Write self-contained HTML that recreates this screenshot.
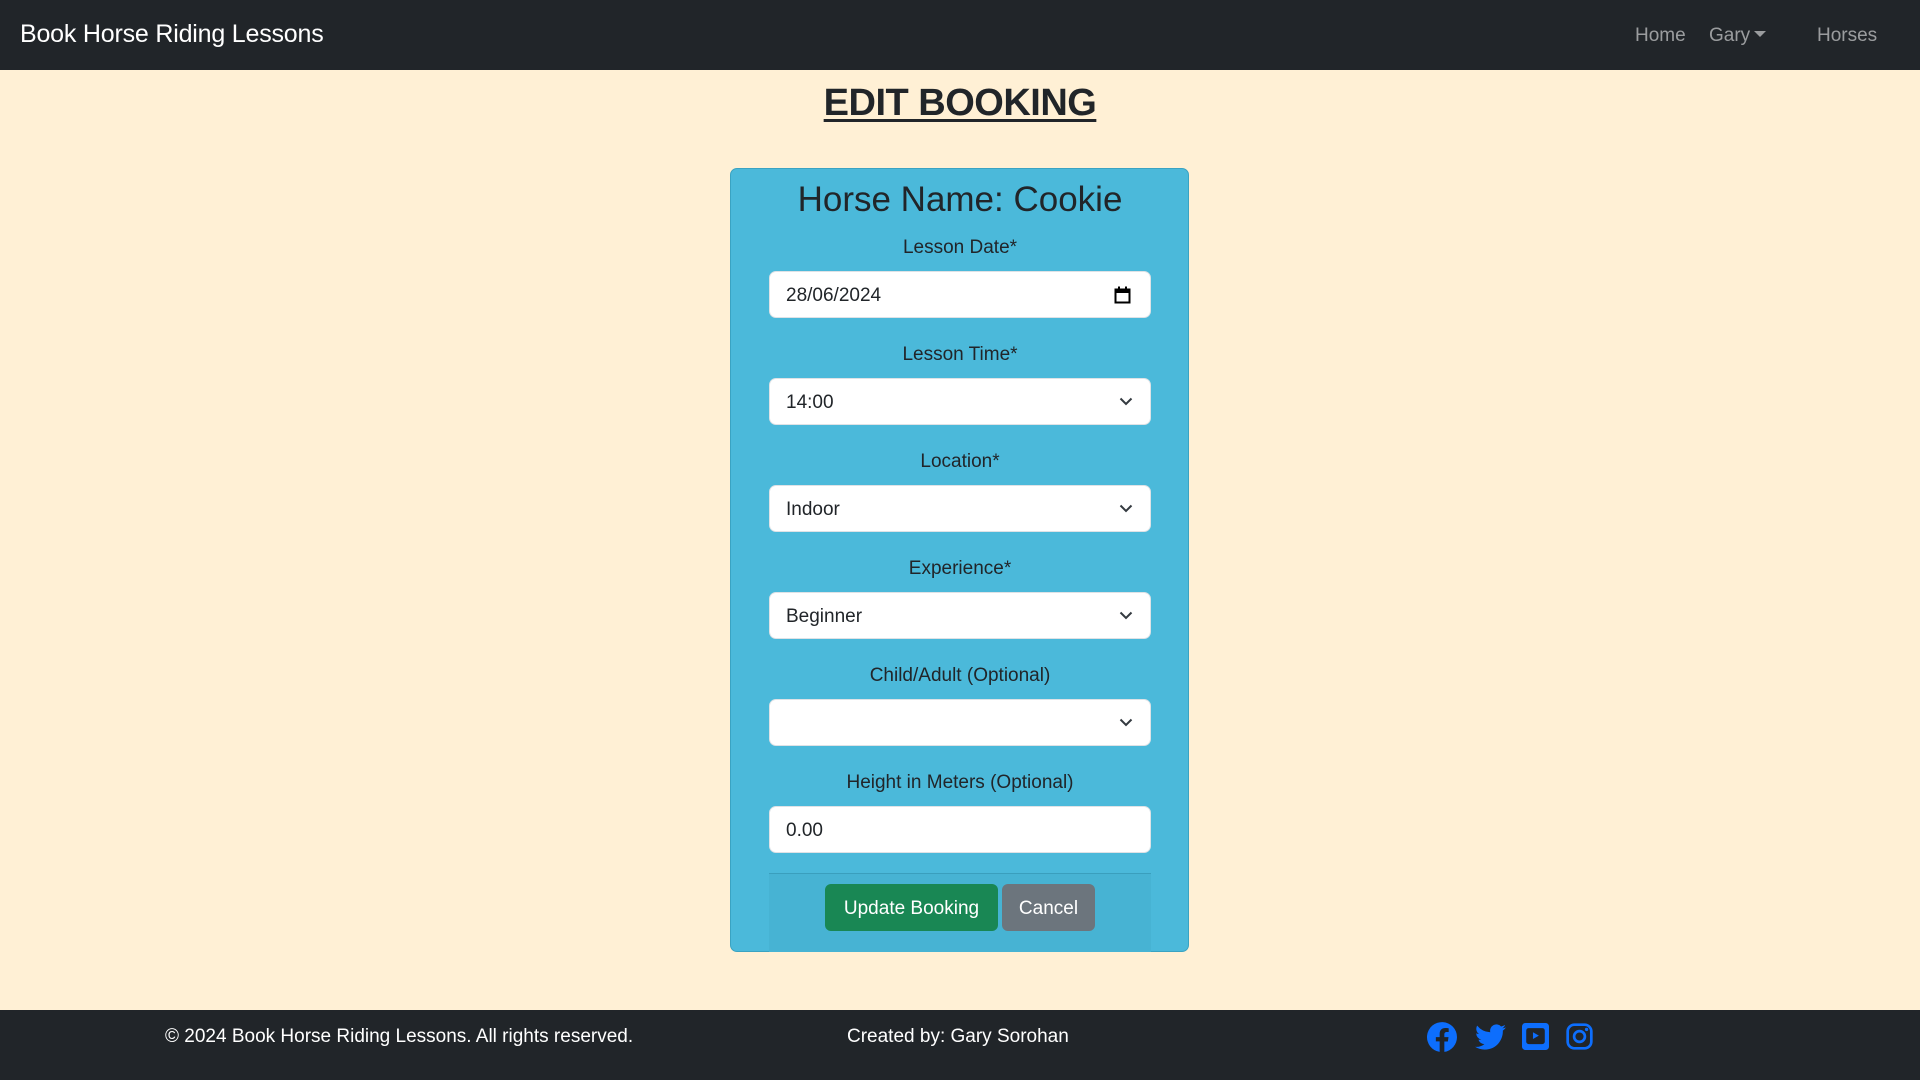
<!DOCTYPE html>
<html><head><meta charset="utf-8"><style>
*{box-sizing:border-box;margin:0;padding:0}
body{width:1920px;height:1080px;background:#fff0d5;font-family:"Liberation Sans",Arial,sans-serif;color:#212529;position:relative;overflow:hidden}
.nav{position:absolute;left:0;top:0;width:1920px;height:70px;background:#212529}
.brand{position:absolute;left:20px;top:20px;font-size:25px;color:#fff;letter-spacing:-0.2px}
.nl{position:absolute;top:25px;font-size:19px;color:rgba(255,255,255,.55)}
.caret{display:inline-block;width:0;height:0;border-left:6px solid transparent;border-right:6px solid transparent;border-top:6px solid rgba(255,255,255,.55);vertical-align:4px;margin-left:4px}
h1{position:absolute;left:0;width:1920px;top:82px;text-align:center;font-size:38px;font-weight:bold;letter-spacing:-0.5px;text-decoration:underline;text-underline-offset:4px;text-decoration-thickness:3px}
.card{position:absolute;left:730px;top:168px;width:459px;height:784px;background:#4bb9da;border:1px solid #3aa3c2;border-radius:7px}
.h2{position:absolute;left:0;width:100%;top:180px;text-align:center;font-size:35px}
.lbl{position:absolute;left:0;width:1920px;text-align:center;font-size:19px;color:#212529;margin-top:2px}
.in{position:absolute;left:769px;width:382px;height:47px;background:#fff;border:1px solid #dee2e6;border-radius:7px;font-size:19px;padding:13px 0 0 16px}
.chev{position:absolute;right:17px;top:17px}
.ft{position:absolute;left:769px;top:873px;width:382px;height:79px;background:#47b3d3;border-top:1px solid #3a9fbd}
.btn{position:absolute;top:884px;height:47px;border-radius:6px;color:#fff;font-size:19px;text-align:center;padding-top:14px}
.foot{position:absolute;left:0;top:1010px;width:1920px;height:70px;background:#212529;color:#fff;font-size:19px}
</style></head><body>
<div class="nav">
<div class="brand">Book Horse Riding Lessons</div>
<div class="nl" style="left:1635px">Home</div>
<div class="nl" style="left:1709px">Gary<span class="caret"></span></div>
<div class="nl" style="left:1817px">Horses</div>
</div>
<h1>EDIT BOOKING</h1>
<div class="card"></div>
<div class="h2">Horse Name: Cookie</div>

<div class="lbl" style="top:235px">Lesson Date*</div>
<div class="in" style="top:271px">28/06/2024
<svg style="position:absolute;right:19px;top:14px" width="17" height="18" viewBox="0 0 17 18"><rect x="1.5" y="3.5" width="14" height="13" fill="none" stroke="#000" stroke-width="2"/><rect x="1" y="3" width="15" height="4" fill="#000"/><rect x="4" y="0.5" width="2" height="3" fill="#000"/><rect x="11" y="0.5" width="2" height="3" fill="#000"/></svg></div>

<div class="lbl" style="top:342px">Lesson Time*</div>
<div class="in" style="top:378px">14:00<svg class="chev" width="14" height="10" viewBox="0 0 14 10"><path d="M1.5 2.5L7 8l5.5-5.5" fill="none" stroke="#343a40" stroke-width="2"/></svg></div>

<div class="lbl" style="top:449px">Location*</div>
<div class="in" style="top:485px">Indoor<svg class="chev" width="14" height="10" viewBox="0 0 14 10"><path d="M1.5 2.5L7 8l5.5-5.5" fill="none" stroke="#343a40" stroke-width="2"/></svg></div>

<div class="lbl" style="top:556px">Experience*</div>
<div class="in" style="top:592px">Beginner<svg class="chev" width="14" height="10" viewBox="0 0 14 10"><path d="M1.5 2.5L7 8l5.5-5.5" fill="none" stroke="#343a40" stroke-width="2"/></svg></div>

<div class="lbl" style="top:663px">Child/Adult (Optional)</div>
<div class="in" style="top:699px"><svg class="chev" width="14" height="10" viewBox="0 0 14 10"><path d="M1.5 2.5L7 8l5.5-5.5" fill="none" stroke="#343a40" stroke-width="2"/></svg></div>

<div class="lbl" style="top:770px">Height in Meters (Optional)</div>
<div class="in" style="top:806px">0.00</div>

<div class="ft"></div>
<div class="btn" style="left:825px;width:173px;background:#198754">Update Booking</div>
<div class="btn" style="left:1002px;width:93px;background:#6c757d">Cancel</div>

<div class="foot">
<div style="position:absolute;left:165px;top:16px">© 2024 Book Horse Riding Lessons. All rights reserved.</div>
<div style="position:absolute;left:847px;top:16px">Created by: Gary Sorohan</div>
<svg style="position:absolute;left:1427px;top:12px" width="30" height="30" viewBox="0 0 16 16"><path fill="#0d6efd" d="M16 8.05A8 8 0 1 0 6.75 15.950V10.36H4.72V8.05h2.03V6.29c0-2 1.19-3.11 3.020-3.11.87 0 1.79.16 1.79.16v1.97h-1.01c-.99 0-1.3.62-1.3 1.25v1.5h2.22l-.35 2.310H9.25v5.590A8 8 0 0 0 16 8.05"/></svg>
<svg style="position:absolute;left:1475px;top:13px" width="31" height="28" viewBox="0 0 16 14"><path fill="#0d6efd" d="M5.03 13.5c6.04 0 9.34-5 9.34-9.34v-.42A6.7 6.7 0 0 0 16 2.04a6.6 6.6 0 0 1-1.89.52A3.3 3.3 0 0 0 15.55.75a6.6 6.6 0 0 1-2.08.8A3.28 3.28 0 0 0 7.88 4.54 9.3 9.3 0 0 1 1.11 1.1a3.28 3.28 0 0 0 1.02 4.38A3.3 3.3 0 0 1 .64 5.07v.04a3.28 3.28 0 0 0 2.630 3.22 3.3 3.3 0 0 1-1.48.06 3.28 3.28 0 0 0 3.07 2.28A6.6 6.6 0 0 1 0 12.03a9.3 9.3 0 0 0 5.03 1.47"/></svg>
<svg style="position:absolute;left:1522px;top:13px" width="27" height="27" viewBox="0 0 16 16"><rect x="0" y="0" width="16" height="16" rx="2" fill="#0d6efd"/><rect x="2.5" y="3" width="11" height="9.5" rx="1.5" fill="#212529"/><path d="M6.5 5.5v4l3.5-2z" fill="#0d6efd"/></svg>
<svg style="position:absolute;left:1566px;top:13px" width="27" height="27" viewBox="0 0 16 16"><rect x="1" y="1" width="14" height="14" rx="4" fill="none" stroke="#0d6efd" stroke-width="1.6"/><circle cx="8" cy="8" r="3.2" fill="none" stroke="#0d6efd" stroke-width="1.6"/><circle cx="12.2" cy="3.8" r="1" fill="#0d6efd"/></svg>
</div>
</body></html>
